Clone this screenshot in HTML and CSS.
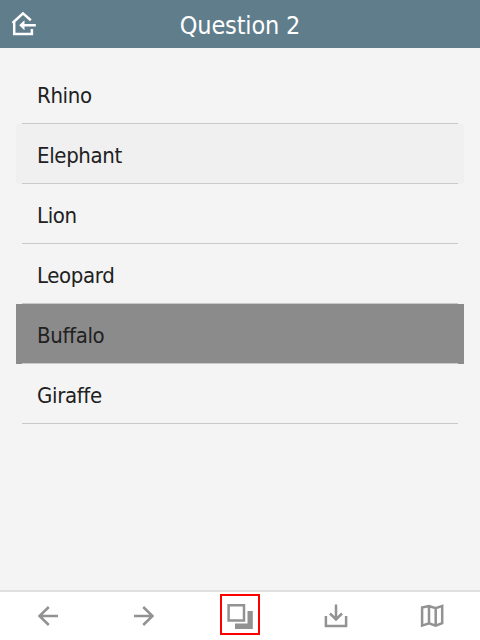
FILE: index.html
```
<!DOCTYPE html>
<html lang="en">
<head>
<meta charset="utf-8">
<title>Question 2</title>
<link rel="stylesheet" href="styles.css">
</head>
<body>
<header class="bar">
  <svg class="home" viewBox="0 0 28 28"><path d="M3.500 13 14 3.400l7.800 6.900M5.200 12v12.100h17.700V19M5.200 24.100h17.700M12 15.200h14.800"/><path class="head" d="M10.200 15.200l5.300-5v10z"/></svg>
  <h1>Question 2</h1>
</header>
<main>
  <ul class="answers">
    <li><span>Rhino</span></li>
    <li class="hover"><span>Elephant</span></li>
    <li><span>Lion</span></li>
    <li><span>Leopard</span></li>
    <li class="selected"><span>Buffalo</span></li>
    <li><span>Giraffe</span></li>
  </ul>
</main>
<nav class="tools">
  <a><svg viewBox="0 0 40 41"><path d="M30 22H11.500M20.800 13 11.500 22l9.300 9"/></svg></a>
  <a><svg viewBox="0 0 40 41"><path d="M10 22h18.500M19.200 13l9.300 9-9.300 9"/></svg></a>
  <a class="current"><svg viewBox="0 0 40 41"><path d="M8.600 11.200H24v15.400H8.600z"/><path class="solid" d="M27.500 17h5.300v18H15v-5.500h12.500z"/></svg></a>
  <a><svg viewBox="0 0 40 41"><path d="M9.900 22v9.900h20.200V22M20 10.500v14.300M14 19.500l6 6 6-6"/></svg></a>
  <a><svg viewBox="0 0 40 41"><path d="M10.100 13.500 17 12l6.700 2.200 6.500-2.300v17.300l-6.500 2.500L17 29.300l-6.900 2.300zM17 12v17.300M23.700 14.200v17.500"/></svg></a>
</nav>
</body>
</html>
```

FILE: styles.css
```
* { box-sizing: border-box; }
body {
  margin: 0;
  height: 640px;
  display: flex;
  flex-direction: column;
  background: #f4f4f4;
  color: #212121;
  font-family: "DejaVu Sans Condensed", "DejaVu Sans", sans-serif;
  font-stretch: condensed;
}
.bar {
  height: 48px;
  display: grid;
  grid-template-columns: 48px 1fr 48px;
  align-items: center;
  background: #607d8b;
  color: #fff;
}
.bar h1 {
  margin: 4px 0 0;
  text-align: center;
  font-size: 25px;
  line-height: 30px;
  font-weight: 400;
  letter-spacing: -0.15px;
}
.home {
  width: 28px;
  height: 28px;
  margin-left: 9px;
  margin-bottom: 1px;
  fill: none;
  stroke: #fff;
  stroke-width: 2.5;
}
.home .head { fill: #fff; stroke: none; }
main { flex: 1; padding: 16px 16px 0; }
.answers { margin: 0; padding: 0; list-style: none; }
.answers li {
  height: 60px;
  padding: 0 6px;
}
.answers span {
  display: block;
  height: 60px;
  padding: 3px 15px 0;
  border-bottom: 1px solid #c9cbcb;
  font-size: 22px;
  line-height: 57px;
  letter-spacing: -0.35px;
}
.answers .hover { background: #f0f0f0; border-radius: 3px; }
.answers .selected { background: #8b8b8b; }
.tools {
  height: 50px;
  border-top: 2px solid #e0e0e0;
  background: #fff;
  display: grid;
  grid-template-columns: repeat(5, 1fr);
  justify-items: center;
}
.tools a { display: block; width: 40px; height: 41px; margin-top: 2px; }
.tools .current { box-shadow: inset 0 0 0 2px #f00; }
.tools svg {
  display: block;
  width: 40px;
  height: 41px;
  fill: none;
  stroke: #929292;
  stroke-width: 2.5;
}
.tools .solid { fill: #929292; stroke: none; }
```
